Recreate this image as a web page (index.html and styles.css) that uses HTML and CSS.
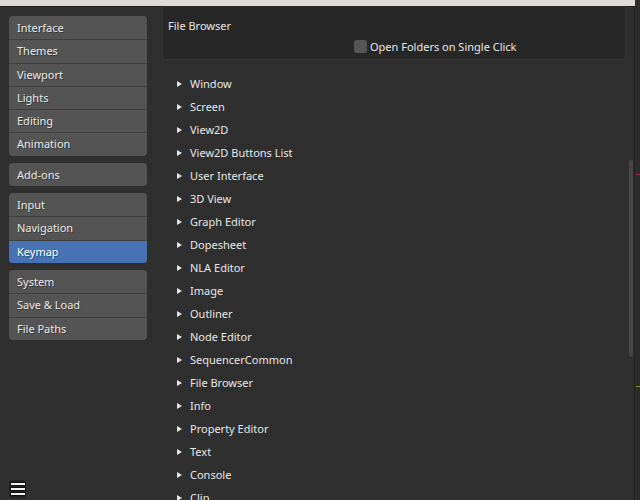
FILE: index.html
```html
<!DOCTYPE html>
<html lang="en-US">
    <head>
        <meta charset="utf-8">
        <title>Preferences - Keymap</title>
        <link rel="stylesheet" href="styles.css">
    </head>
    <body>
        <div class="topBar"></div>

        <div class="window">
            <nav class="sidebar">
                <div class="group">
                    <div class="tab">Interface</div>
                    <div class="tab">Themes</div>
                    <div class="tab">Viewport</div>
                    <div class="tab">Lights</div>
                    <div class="tab">Editing</div>
                    <div class="tab">Animation</div>
                </div>
                <div class="group">
                    <div class="tab">Add-ons</div>
                </div>
                <div class="group">
                    <div class="tab">Input</div>
                    <div class="tab">Navigation</div>
                    <div class="tab active">Keymap</div>
                </div>
                <div class="group">
                    <div class="tab">System</div>
                    <div class="tab">Save &amp; Load</div>
                    <div class="tab">File Paths</div>
                </div>

                <div class="menuButton">
                    <span></span><span></span><span></span>
                </div>
            </nav>

            <main class="content">
                <section class="panel">
                    <div class="panelTitle">File Browser</div>
                    <label class="checkRow">
                        <span class="checkbox"></span>
                        <span>Open Folders on Single Click</span>
                    </label>
                </section>

                <ul class="keymapList">
                    <li>Window</li>
                    <li>Screen</li>
                    <li>View2D</li>
                    <li>View2D Buttons List</li>
                    <li>User Interface</li>
                    <li>3D View</li>
                    <li>Graph Editor</li>
                    <li>Dopesheet</li>
                    <li>NLA Editor</li>
                    <li>Image</li>
                    <li>Outliner</li>
                    <li>Node Editor</li>
                    <li>SequencerCommon</li>
                    <li>File Browser</li>
                    <li>Info</li>
                    <li>Property Editor</li>
                    <li>Text</li>
                    <li>Console</li>
                    <li>Clip</li>
                </ul>

                <div class="scrollbar"></div>
            </main>

            <div class="sideStrip">
                <i class="tick red"></i>
                <i class="tick green"></i>
            </div>
        </div>
    </body>
</html>
```

FILE: styles.css
```css
body {
    margin: 0;
    width: 640px;
    height: 500px;
    overflow: hidden;
    background-color: #2f2f2f;
    font-family: 'Noto Sans', 'DejaVu Sans', sans-serif;
    font-size: 11px;
    color: #e8e8e8;
}

.topBar {
    width: 635px;
    height: 6px;
    background-color: #dfdbd7;
    border-bottom: 1px solid #1c1c1c;
}

.window {
    display: flex;
    height: 493px;
}

/* left navigation */

.sidebar {
    display: flex;
    flex-direction: column;
    gap: 7px;
    width: 153px;
    padding: 9px 0 2px 9px;
    box-sizing: border-box;
}

.group {
    width: 138px;
    border-radius: 4px;
    overflow: hidden;
    background-color: #545454;
}

.tab {
    height: 23.3px;
    line-height: 22px;
    padding-left: 8px;
    box-sizing: border-box;
    border-top: 1px solid #3f3f3f;
    text-shadow: 1px 1px 0 rgba(0, 0, 0, 0.35);
}

.tab:first-child {
    border-top: none;
    line-height: 23px;
}

.tab.active {
    background-color: #4772b3;
    color: #ffffff;
}

.menuButton {
    margin-top: auto;
    width: 17px;
    height: 18px;
    border-radius: 3px;
    background-color: #232323;
    display: flex;
    flex-direction: column;
    justify-content: center;
    align-items: center;
    gap: 3px;
}

.menuButton span {
    display: block;
    width: 14px;
    height: 2px;
    background-color: #f2f2f2;
    box-shadow: 0 0 0 0.5px #000;
}

/* right content */

.content {
    position: relative;
    width: 472px;
    margin-left: 9px;
}

.panel {
    width: 464px;
    height: 54px;
    box-sizing: border-box;
    margin-top: -1px;
    background-color: #272727;
    border: 1px solid #353535;
    border-top: none;
    border-radius: 0 0 4px 4px;
    padding: 13px 0 0 5px;
}

.panelTitle {
    line-height: 14px;
}

.checkRow {
    display: flex;
    align-items: center;
    gap: 3px;
    margin-top: 6px;
    padding-left: 186px;
}

.checkbox {
    width: 13px;
    height: 13px;
    border-radius: 3px;
    background-color: #565656;
}

.keymapList {
    list-style: none;
    margin: 12px 0 0 0;
    padding: 0 0 0 15px;
}

.keymapList li {
    display: flex;
    align-items: center;
    height: 23px;
}

.keymapList li::before {
    content: '';
    width: 0;
    height: 0;
    margin-right: 8px;
    border-top: 3px solid transparent;
    border-bottom: 3px solid transparent;
    border-left: 5px solid #e8e8e8;
}

.scrollbar {
    position: absolute;
    top: 153px;
    left: 467px;
    width: 4px;
    height: 197px;
    border-radius: 2px;
    background-color: #454545;
}

/* neighbouring editor edge */

.sideStrip {
    position: relative;
    flex: 1;
    border-left: 1px solid #222222;
    background-color: #2b2b2b;
}

.tick {
    position: absolute;
    left: 1px;
    width: 5px;
    height: 1px;
}

.tick.red {
    top: 167px;
    background-color: #9a3045;
}

.tick.green {
    top: 379px;
    background-color: #6f9a2a;
}
```
